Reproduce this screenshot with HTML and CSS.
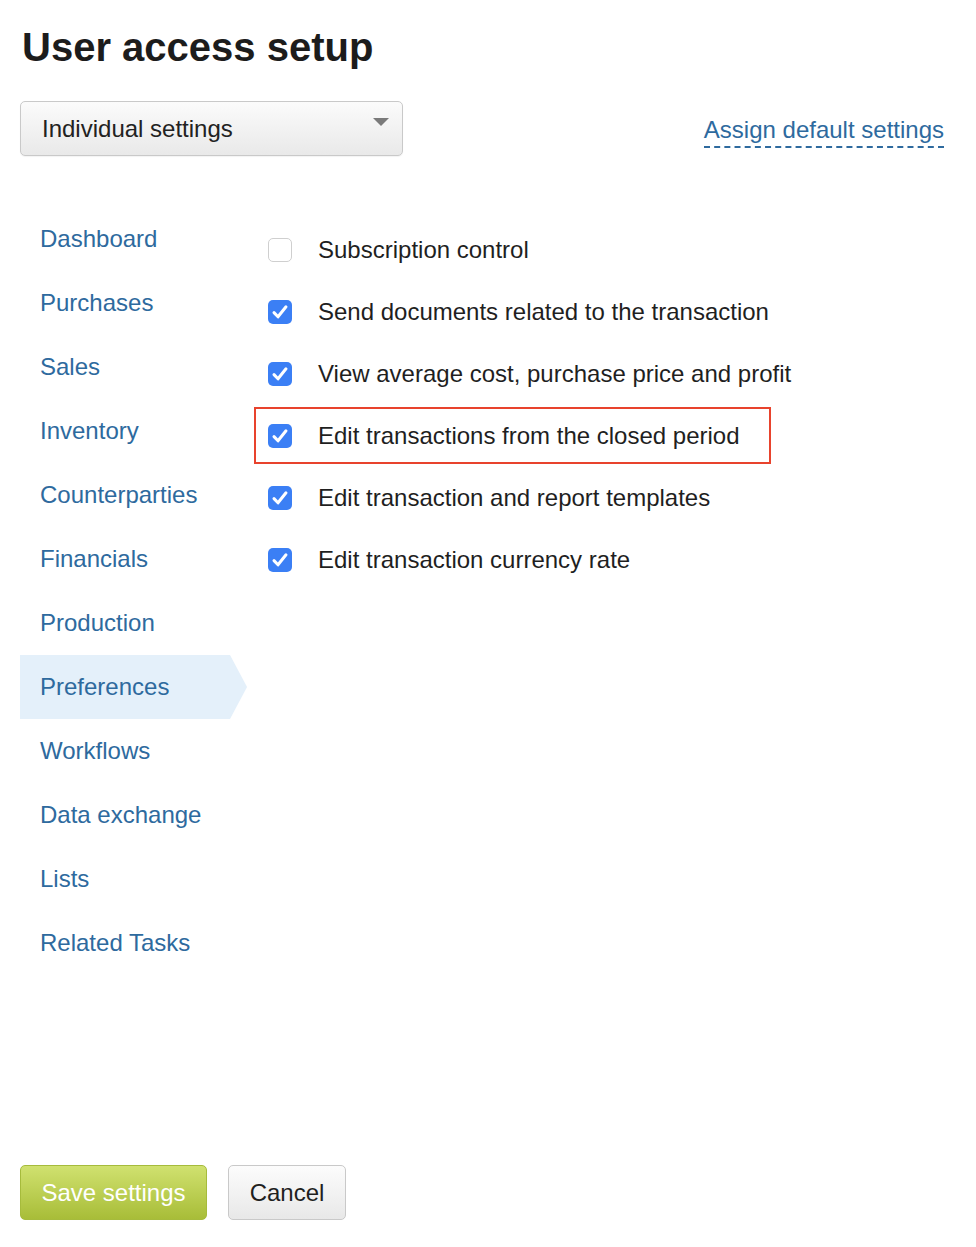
FILE: index.html
```html
<!DOCTYPE html>
<html lang="en">
<head>
<meta charset="utf-8">
<title>User access setup</title>
<link rel="stylesheet" href="styles.css">
</head>
<body>
<div class="page">
  <h1 class="title">User access setup</h1>
  <div class="toolbar">
    <div class="select">
      <span class="select-text">Individual settings</span>
      <span class="select-arrow"></span>
    </div>
    <a class="dash-link" href="#">Assign default settings</a>
  </div>
  <div class="main">
    <ul class="nav">
      <li class="nav-item"><a href="#">Dashboard</a></li>
      <li class="nav-item"><a href="#">Purchases</a></li>
      <li class="nav-item"><a href="#">Sales</a></li>
      <li class="nav-item"><a href="#">Inventory</a></li>
      <li class="nav-item"><a href="#">Counterparties</a></li>
      <li class="nav-item"><a href="#">Financials</a></li>
      <li class="nav-item"><a href="#">Production</a></li>
      <li class="nav-item active"><a href="#">Preferences</a></li>
      <li class="nav-item"><a href="#">Workflows</a></li>
      <li class="nav-item"><a href="#">Data exchange</a></li>
      <li class="nav-item"><a href="#">Lists</a></li>
      <li class="nav-item"><a href="#">Related Tasks</a></li>
    </ul>
    <div class="options">
      <div class="option">
        <span class="box"></span>
        <span class="label">Subscription control</span>
      </div>
      <div class="option">
        <span class="box checked"><svg viewBox="0 0 24 24"><path d="M6 12.6l4 4.2 8-10"/></svg></span>
        <span class="label">Send documents related to the transaction</span>
      </div>
      <div class="option">
        <span class="box checked"><svg viewBox="0 0 24 24"><path d="M6 12.6l4 4.2 8-10"/></svg></span>
        <span class="label">View average cost, purchase price and profit</span>
      </div>
      <div class="option highlight">
        <span class="box checked"><svg viewBox="0 0 24 24"><path d="M6 12.6l4 4.2 8-10"/></svg></span>
        <span class="label">Edit transactions from the closed period</span>
      </div>
      <div class="option">
        <span class="box checked"><svg viewBox="0 0 24 24"><path d="M6 12.6l4 4.2 8-10"/></svg></span>
        <span class="label">Edit transaction and report templates</span>
      </div>
      <div class="option">
        <span class="box checked"><svg viewBox="0 0 24 24"><path d="M6 12.6l4 4.2 8-10"/></svg></span>
        <span class="label">Edit transaction currency rate</span>
      </div>
    </div>
  </div>
  <div class="footer">
    <button class="btn btn-save" type="button">Save settings</button>
    <button class="btn btn-cancel" type="button">Cancel</button>
  </div>
</div>
</body>
</html>
```
FILE: styles.css
```css
* { box-sizing: border-box; }
html, body { margin: 0; padding: 0; background: #fff; }
body {
  font-family: "Liberation Sans", Arial, Helvetica, sans-serif;
  color: #1f1f1f;
}
.page {
  padding: 24px 32px 0 20px;
}
.title {
  margin: 0 0 0 2px;
  font-size: 40px;
  line-height: 46px;
  font-weight: bold;
  color: #1c1c1c;
}
.toolbar {
  margin-top: 31px;
  display: flex;
  align-items: center;
  justify-content: space-between;
}
.select {
  width: 383px;
  height: 55px;
  border: 1px solid #c9c9c9;
  border-radius: 5px;
  background: linear-gradient(#fbfbfb, #e9e9e9);
  display: flex;
  align-items: center;
  justify-content: space-between;
  padding: 0 13px 0 21px;
  box-shadow: 0 1px 1px rgba(0,0,0,0.05);
}
.select-text {
  font-size: 24px;
  color: #222;
  line-height: 28px;
}
.select-arrow {
  width: 0;
  height: 0;
  border-left: 8px solid transparent;
  border-right: 8px solid transparent;
  border-top: 8px solid #7a7a7a;
  align-self: flex-start;
  margin-top: 16px;
}
.dash-link {
  font-size: 24px;
  line-height: 26px;
  color: #2e6a9e;
  text-decoration: none;
  border-bottom: 2px dashed #2e6a9e;
  padding-bottom: 3px;
  margin-top: 7px;
}
.main {
  margin-top: 51px;
  display: grid;
  grid-template-columns: 234px 1fr;
  align-items: start;
}
.nav {
  list-style: none;
  margin: 0;
  padding: 0;
}
.nav-item {
  position: relative;
  width: 210px;
  height: 64px;
  display: flex;
  align-items: center;
  padding-left: 20px;
}
.nav-item a {
  font-size: 24px;
  color: #2e6a9e;
  text-decoration: none;
}
.nav-item.active {
  background: #e4f0fa;
}
.nav-item.active::after {
  content: "";
  position: absolute;
  top: 0;
  right: -17px;
  width: 0;
  height: 0;
  border-top: 32px solid transparent;
  border-bottom: 32px solid transparent;
  border-left: 17px solid #e4f0fa;
}
.options {
  padding-top: 14px;
  display: flex;
  flex-direction: column;
  gap: 5px;
}
.option {
  height: 57px;
  display: flex;
  align-items: center;
  padding-left: 14px;
  width: 517px;
  border: 2px solid transparent;
}
.option.highlight {
  border-color: #e8432d;
}
.box {
  width: 24px;
  height: 24px;
  border-radius: 5px;
  border: 1px solid #cfcfcf;
  background: #fff;
  flex: none;
  margin-left: -2px;
  display: flex;
  align-items: center;
  justify-content: center;
}
.box.checked {
  border: none;
  background: #3b7ff5;
}
.box svg {
  width: 24px;
  height: 24px;
  fill: none;
  stroke: #fff;
  stroke-width: 3;
  stroke-linecap: round;
  stroke-linejoin: round;
}
.label {
  margin-left: 26px;
  font-size: 24px;
  color: #1f1f1f;
  white-space: nowrap;
}
.footer {
  margin-top: 190px;
  display: flex;
  gap: 21px;
}
.btn {
  height: 55px;
  font-family: inherit;
  font-size: 24px;
  border-radius: 5px;
  padding: 0;
  white-space: nowrap;
  cursor: pointer;
}
.btn-save {
  width: 187px;
  color: #fff;
  border: 1px solid #a6bb3c;
  background: linear-gradient(#d0e16f, #a8bd38);
}
.btn-cancel {
  width: 118px;
  color: #1f1f1f;
  border: 1px solid #c9c9c9;
  background: linear-gradient(#fcfcfc, #e8e8e8);
}
```
